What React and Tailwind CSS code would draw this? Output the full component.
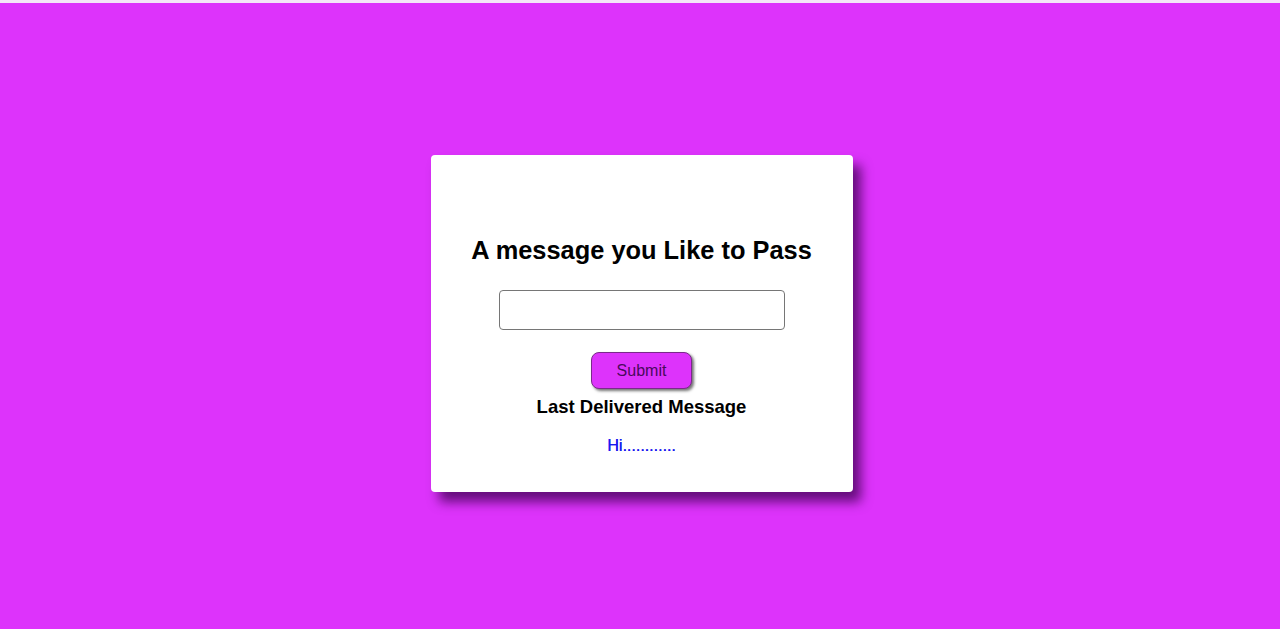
import React from "react";

const App = () => {
  return (
    <div className="w-full h-[629px] bg-[#f4e6f7] pt-[3px] font-['Liberation_Sans',Arial,sans-serif]">
      <div className="h-[626px] bg-[#dd33fb] flex items-start justify-center pt-[152px] pl-[3px]">
        {/* Card */}
        <div className="w-[422px] h-[337px] bg-white rounded-[4px] shadow-[8px_10px_12px_rgba(60,0,80,0.75)] flex flex-col items-center pt-[81px]">
          <h1 className="text-[25.4px] leading-[28px] font-bold text-black">
            A message you Like to Pass
          </h1>
          <input
            type="text"
            className="mt-[26px] w-[286px] h-[40px] border border-[#767676] rounded-[4px] px-2 outline-none"
          />
          <button className="mt-[22px] w-[101px] h-[37px] bg-[#dd33fb] border border-[#7a2a8a] rounded-[8px] text-[16px] text-[#4a0a5c] shadow-[2px_2px_3px_rgba(0,0,0,0.55)]">
            Submit
          </button>
          <h3 className="mt-[7px] text-[18.5px] leading-[21px] font-bold text-black">
            Last Delivered Message
          </h3>
          <p className="mt-[20px] text-[16px] leading-[18px] text-[#1a1af0] [text-shadow:0.3px_0_0_#1a1af0]">
            Hi............
          </p>
        </div>
      </div>
    </div>
  );
};

export default App;
